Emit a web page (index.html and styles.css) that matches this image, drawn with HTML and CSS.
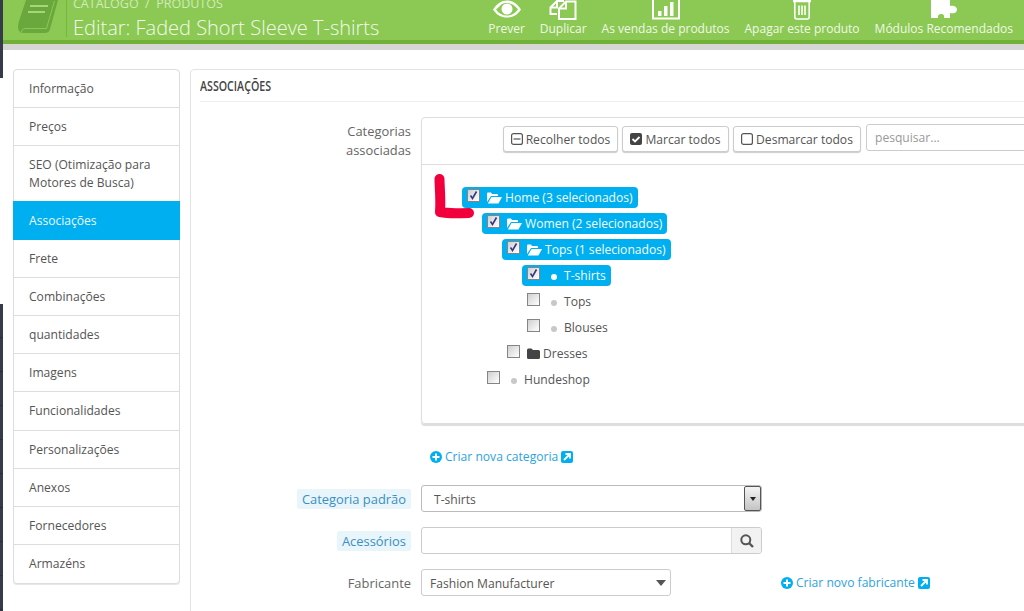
FILE: index.html
```html
<!DOCTYPE html>
<html lang="pt">
<head>
<meta charset="utf-8">
<title>Editar: Faded Short Sleeve T-shirts</title>
<link rel="stylesheet" href="styles.css">
</head>
<body>
<div class="page">
  <div class="rail"><div class="rail-top"></div><div class="rail-gap"></div><div class="rail-bottom"></div></div>
  <div class="main">
    <header class="header">
      <svg class="book" viewBox="0 0 42 36"><path d="M9 0H41L33 29Q32 33 28 33H7Q1 33 1 27Q1 24 2 21z" fill="#6aa83e"/><path d="M4.500 32Q4.500 28.500 9 28.500H29.500L37.500 1" fill="none" stroke="#8bc954" stroke-width="1"/><path d="M13 6h18M11 12h17" stroke="#a5d67a" stroke-width="2"/></svg>
      <div class="titles">
        <div class="crumb">CATÁLOGO &nbsp;/&nbsp; PRODUTOS</div>
        <h1 class="title">Editar: Faded Short Sleeve T-shirts</h1>
      </div>
      <nav class="actions">
        <div class="action">
          <svg class="a-icon" width="30" height="20" viewBox="0 0 30 20"><path d="M1 9.500C5 3.500 9.500 0.500 15 0.500s10 3 14 9c-4 6-8.500 8-14 8s-10-2-14-8z" fill="#fff"/><path d="M4 9.500c3 4 6.500 6 11 6s8-2 11-6c-3-4-6.500-6.500-11-6.500-2 0-4 .5-5 1z" fill="#8bc954"/><circle cx="15" cy="9" r="5.500" fill="#fff"/></svg>
          <span>Prever</span>
        </div>
        <div class="action">
          <svg class="a-icon" width="28" height="20" viewBox="0 0 28 20" fill="none" stroke="#fff" stroke-width="2"><path d="M15 1H8L1.500 7.500V14H8"/><path d="M8 1V7.500H1.500"/><path d="M17 1.500H26.500V19H10V8.500z"/><path d="M17 1.500V8.500H10"/></svg>
          <span>Duplicar</span>
        </div>
        <div class="action">
          <svg class="a-icon" width="30" height="20" viewBox="0 0 30 20"><path d="M2 -3V18.500H28V-3" fill="none" stroke="#fff" stroke-width="2"/><path d="M7 11h3.500v5H7zM13 6h3.500v10H13zM19 2h3.500v14H19z" fill="#fff"/></svg>
          <span>As vendas de produtos</span>
        </div>
        <div class="action">
          <svg class="a-icon" width="22" height="20" viewBox="0 0 22 20" fill="none" stroke="#fff" stroke-width="1.600"><path d="M3.800 2V17a2 2 0 0 0 2 2h10.400a2 2 0 0 0 2-2V2"/><path d="M2 1h18" stroke-width="2.500"/><path d="M8 5.500v9.500M11 5.500v9.500M14 5.500v9.500"/></svg>
          <span>Apagar este produto</span>
        </div>
        <div class="action">
          <svg class="a-icon" width="28" height="20" viewBox="0 0 28 20"><path d="M1 0h19v6c3-1 7 0 7 3.500s-4 4.500-7 3.500v5h-6c1-3-1-4-3-4s-3.500 1-3 4H1z" fill="#fff"/></svg>
          <span>Módulos Recomendados</span>
        </div>
      </nav>
    </header>
    <div class="band"></div>
    <div class="content">
      <ul class="tabs">
        <li class="tab">Informação</li>
        <li class="tab">Preços</li>
        <li class="tab tab-wide">SEO (Otimização para Motores de Busca)</li>
        <li class="tab tab-active">Associações</li>
        <li class="tab">Frete</li>
        <li class="tab">Combinações</li>
        <li class="tab">quantidades</li>
        <li class="tab">Imagens</li>
        <li class="tab tab-tall">Funcionalidades</li>
        <li class="tab">Personalizações</li>
        <li class="tab">Anexos</li>
        <li class="tab">Fornecedores</li>
        <li class="tab tab-last">Armazéns</li>
      </ul>
      <section class="panel">
        <h2 class="panel-head"><span class="panel-head-text">ASSOCIAÇÕES</span></h2>
        <div class="form-row row-tree">
          <div class="label label-tree">Categorias associadas</div>
          <div class="tree-box">
            <div class="tree-bar">
              <div class="btn btn-1"><svg class="b-icon" width="12" height="12" viewBox="0 0 12 12" fill="none" stroke="#555" stroke-width="1.200"><rect x=".6" y=".6" width="10.800" height="10.800" rx="2"/><path d="M2.500 6h7"/></svg>Recolher todos</div>
              <div class="btn btn-2"><svg class="b-icon" width="12" height="12" viewBox="0 0 12 12"><rect width="12" height="12" rx="2" fill="#444"/><path d="M2.500 6l2.500 2.500 4.500-4.500" fill="none" stroke="#fff" stroke-width="1.800"/></svg>Marcar todos</div>
              <div class="btn btn-3"><svg class="b-icon" width="12" height="12" viewBox="0 0 12 12" fill="none" stroke="#555" stroke-width="1.200"><rect x=".6" y=".6" width="10.800" height="10.800" rx="2"/></svg>Desmarcar todos</div>
              <div class="search">pesquisar...</div>
            </div>
            <ul class="tree">
              <li class="node level-0">
                <span class="pill"><span class="box"><svg class="tick" viewBox="0 0 11 11"><path d="M2.500 5.500l2 3 4-7" fill="none" stroke="#34397f" stroke-width="1.600"/></svg></span><svg class="folder" width="15" height="12" viewBox="0 0 15 12"><path d="M0 10V1.500A1 1 0 0 1 1 .5h3l1 1.500h5a1 1 0 0 1 1 1V4H4L0 10zM4.500 5H15l-3.500 6.500H.8z" fill="#fff"/></svg>Home (3 selecionados)</span>
              </li>
              <li class="node level-1">
                <span class="pill"><span class="box"><svg class="tick" viewBox="0 0 11 11"><path d="M2.500 5.500l2 3 4-7" fill="none" stroke="#34397f" stroke-width="1.600"/></svg></span><svg class="folder" width="15" height="12" viewBox="0 0 15 12"><path d="M0 10V1.500A1 1 0 0 1 1 .5h3l1 1.500h5a1 1 0 0 1 1 1V4H4L0 10zM4.500 5H15l-3.500 6.500H.8z" fill="#fff"/></svg>Women (2 selecionados)</span>
              </li>
              <li class="node level-2">
                <span class="pill"><span class="box"><svg class="tick" viewBox="0 0 11 11"><path d="M2.500 5.500l2 3 4-7" fill="none" stroke="#34397f" stroke-width="1.600"/></svg></span><svg class="folder" width="15" height="12" viewBox="0 0 15 12"><path d="M0 10V1.500A1 1 0 0 1 1 .5h3l1 1.500h5a1 1 0 0 1 1 1V4H4L0 10zM4.500 5H15l-3.500 6.500H.8z" fill="#fff"/></svg>Tops (1 selecionados)</span>
              </li>
              <li class="node level-3">
                <span class="pill"><span class="box"><svg class="tick" viewBox="0 0 11 11"><path d="M2.500 5.500l2 3 4-7" fill="none" stroke="#34397f" stroke-width="1.600"/></svg></span><span class="dot dot-on"></span>T-shirts</span>
              </li>
              <li class="node level-3"><span class="plain"><span class="box"></span><span class="dot"></span>Tops</span></li>
              <li class="node level-3"><span class="plain"><span class="box"></span><span class="dot"></span>Blouses</span></li>
              <li class="node level-2"><span class="plain"><span class="box"></span><svg class="folder folder-closed" width="13" height="11" viewBox="0 0 13 11"><path d="M0 2a1.500 1.500 0 0 1 1.500-1.500h3L6 2h5.500A1.500 1.500 0 0 1 13 3.500v6a1.500 1.500 0 0 1-1.500 1.500h-10A1.500 1.500 0 0 1 0 9.500z" fill="#444"/></svg>Dresses</span></li>
              <li class="node level-1"><span class="plain"><span class="box"></span><span class="dot"></span>Hundeshop</span></li>
            </ul>
          </div>
        </div>
        <div class="link-row">
          <span class="link"><svg class="plus" width="12" height="12" viewBox="0 0 12 12"><circle cx="6" cy="6" r="6" fill="#00aff0"/><path d="M6 2.500v7M2.500 6h7" stroke="#fff" stroke-width="2"/></svg>Criar nova categoria<svg class="ext" width="12" height="12" viewBox="0 0 12 12"><rect width="12" height="12" rx="2" fill="#00aff0"/><path d="M3 9l5-5M4.500 3H9v4.500" fill="none" stroke="#fff" stroke-width="1.800"/></svg></span>
        </div>
        <div class="form-row row-default">
          <div class="label"><span class="hint">Categoria padrão</span></div>
          <div class="select-native"><span class="field-text">T-shirts</span><span class="native-arrow"><span class="caret caret-small"></span></span></div>
        </div>
        <div class="form-row row-acc">
          <div class="label"><span class="hint">Acessórios</span></div>
          <div class="search-group"><span class="sg-input"></span><span class="sg-btn"><svg width="14" height="14" viewBox="0 0 14 14" fill="none" stroke="#555" stroke-width="2"><circle cx="5.800" cy="5.800" r="4.500"/><path d="M9 9l4 4" stroke-width="2.400"/></svg></span></div>
        </div>
        <div class="form-row row-maker">
          <div class="label">Fabricante</div>
          <div class="select-plain"><span class="field-text">Fashion Manufacturer</span><span class="caret"></span></div>
          <span class="link link-maker"><svg class="plus" width="12" height="12" viewBox="0 0 12 12"><circle cx="6" cy="6" r="6" fill="#00aff0"/><path d="M6 2.500v7M2.500 6h7" stroke="#fff" stroke-width="2"/></svg>Criar novo fabricante<svg class="ext" width="12" height="12" viewBox="0 0 12 12"><rect width="12" height="12" rx="2" fill="#00aff0"/><path d="M3 9l5-5M4.500 3H9v4.500" fill="none" stroke="#fff" stroke-width="1.800"/></svg></span>
        </div>
      </section>
    </div>
  </div>
</div>
<svg class="scribble" width="50" height="50" viewBox="0 0 50 50"><path d="M10.500 5c0 8 1.500 20 .5 33 10 2 18 1 29 1" fill="none" stroke="#f2003c" stroke-width="10" stroke-linecap="round" stroke-linejoin="round"/></svg>
</body>
</html>
```
FILE: styles.css
```css
* { box-sizing: border-box; }
html, body { margin: 0; padding: 0; height: 611px; overflow: hidden; background: #fff; }
body { font-family: "Open Sans", "Liberation Sans", sans-serif; font-size: 12.1px; color: #555; }
ul { list-style: none; margin: 0; padding: 0; }

.page { display: flex; width: 1024px; height: 611px; overflow: hidden; }

.rail { flex: 0 0 3px; display: flex; flex-direction: column; }
.rail-top { height: 78px; background: #363a4c; }
.rail-gap { height: 226px; background: #fff; }
.rail-bottom { flex: 1; background: repeating-linear-gradient(#363a4c 0 33px, #2a2d3c 33px 34px); }

.main { flex: 1; min-width: 0; }

.header { height: 44px; background: #8bc954; border-bottom: 4px solid #72b137; display: flex; align-items: flex-end; overflow: hidden; position: relative; }
.book { flex: 0 0 42px; height: 36px; margin: 0 0 4px 14px; align-self: flex-start; }
.titles { margin-left: 7px; padding-left: 6px; border-left: 1px solid #77b541; height: 37px; align-self: flex-start; display: flex; flex-direction: column; justify-content: flex-end; }
.crumb { font-size: 12.5px; color: #d3eabc; line-height: 18px; white-space: nowrap; margin: -6px 0 2px; }
.title { margin: 0 0 -3px; font-size: 20px; font-weight: 300; color: #f2f9ea; line-height: 25px; white-space: nowrap; }

.actions { margin-left: auto; display: flex; gap: 15px; padding-right: 11px; align-self: flex-start; }
.action { display: flex; flex-direction: column; align-items: center; color: #f0f8e6; font-size: 12px; line-height: 18px; white-space: nowrap; }
.a-icon { display: block; margin-bottom: 0; }

.band { height: 6px; background: #d6d6d6; }

.content { display: flex; align-items: flex-start; gap: 10px; padding: 19px 0 0 10px; }

.tabs { flex: 0 0 167px; border: 1px solid #ddd; border-radius: 4px; box-shadow: 0 1px 0 #e8e8e8; background: #fff; }
.tab { height: 38px; padding: 0 15px; display: flex; align-items: center; border-bottom: 1px solid #ddd; line-height: 18px; }
.tab-wide { height: 56px; }
.tab-tall { height: 39px; }
.tab-active { height: 39px; background: #00aff0; color: #e8f8ff; border-bottom-color: #00aff0; margin: -1px -1px 0; padding: 1px 16px 0; }
.tab-last { border-bottom: 0; }

.panel { flex: 0 0 860px; height: 560px; border: 1px solid #e3e3e3; border-radius: 4px; background: #fff; }
.panel-head { margin: 0 0 0 9px; height: 32px; border-bottom: 1px solid #eee; font-size: 14px; font-weight: 600; color: #444; line-height: 31px; }
.panel-head-text { display: inline-block; transform: scaleX(0.76); transform-origin: left center; white-space: nowrap; }

.form-row { display: flex; align-items: center; gap: 10px; }
.label { flex: 0 0 220px; text-align: right; color: #666; font-size: 12.9px; line-height: 19px; padding-top: 2px; }
.row-tree { align-items: flex-start; margin-top: 15px; }
.label-tree { padding: 5px 0 0 120px; }
.hint { background: #e8f5fb; color: #3a8fc2; padding: 1px 5px; border-radius: 2px; }
.field-text { padding-top: 2px; }

.tree-box { flex: 0 0 640px; height: 307px; border: 1px solid #ddd; border-radius: 4px; box-shadow: 0 2px 1px #ddd; }
.tree-bar { height: 47px; border-bottom: 1px solid #ddd; display: flex; align-items: flex-start; gap: 4px; padding: 8px 0 0 81px; }
.btn { height: 26px; border: 1px solid #ccc; border-radius: 3px; box-shadow: 0 1px 1px #ccc; display: flex; align-items: center; justify-content: center; gap: 3px; white-space: nowrap; background: #fff; color: #555; font-size: 12.1px; }
.btn-1 { width: 115px; }
.btn-2 { width: 107px; }
.btn-3 { width: 128px; }
.b-icon { flex: none; }
.search { margin: -2px 0 0 1px; width: 220px; height: 27px; border: 1px solid #ccc; border-radius: 3px; display: flex; align-items: center; padding: 0 8px; color: #999; }

.tree { padding-top: 22px; }
.node { height: 26px; display: flex; align-items: flex-start; white-space: nowrap; }
.level-0 { padding-left: 40px; }
.level-1 { padding-left: 60px; }
.level-2 { padding-left: 80px; }
.level-3 { padding-left: 100px; }
.pill, .plain { height: 21px; display: inline-flex; align-items: center; padding: 0 5px; border-radius: 4px; color: #555; }
.pill { background: #00aff0; color: #f2fbff; }
.box { flex: none; width: 13px; height: 13px; border: 1px solid #858585; background: linear-gradient(135deg, #cfcfcf, #fff); margin: -5px 7px 0 0; display: block; }
.tick { display: block; width: 11px; height: 11px; }
.folder { flex: none; margin-right: 3px; }
.dot { flex: none; width: 6px; height: 6px; border-radius: 50%; background: #c8c8c8; margin: 3px 7px 0 4px; }
.dot-on { background: #fff; }

.link-row { padding: 24px 0 0 239px; height: 61px; }
.link { display: inline-flex; align-items: center; gap: 3px; color: #2ea3df; white-space: nowrap; line-height: 18px; }
.plus, .ext { flex: none; }

.row-default { height: 27px; }
.row-acc { height: 27px; margin-top: 15px; }
.row-maker { height: 27px; margin-top: 15px; }

.select-native { flex: 0 0 341px; height: 27px; border: 1px solid #bbb; border-radius: 3px; display: flex; align-items: center; justify-content: space-between; padding-left: 12px; }
.native-arrow { width: 17px; height: 25px; border: 1px solid #555; border-radius: 2px; background: linear-gradient(#f4f4f4, #c4c4c4); display: flex; align-items: center; justify-content: center; }
.caret { width: 0; height: 0; border-left: 5px solid transparent; border-right: 5px solid transparent; border-top: 6px solid #555; }
.caret-small { border-left-width: 3.500px; border-right-width: 3.500px; border-top: 4px solid #222; }

.search-group { flex: 0 0 341px; height: 27px; display: flex; border: 1px solid #ccc; border-radius: 3px; overflow: hidden; }
.sg-input { flex: 1; }
.sg-btn { flex: 0 0 30px; background: #f2f2f2; border-left: 1px solid #ddd; display: flex; align-items: center; justify-content: center; }

.select-plain { flex: 0 0 250px; height: 27px; border: 1px solid #ccc; border-radius: 3px; display: flex; align-items: center; justify-content: space-between; padding: 0 4px 0 8px; }
.link-maker { margin-left: 100px; }

.scribble { position: absolute; left: 429px; top: 174px; }
```
